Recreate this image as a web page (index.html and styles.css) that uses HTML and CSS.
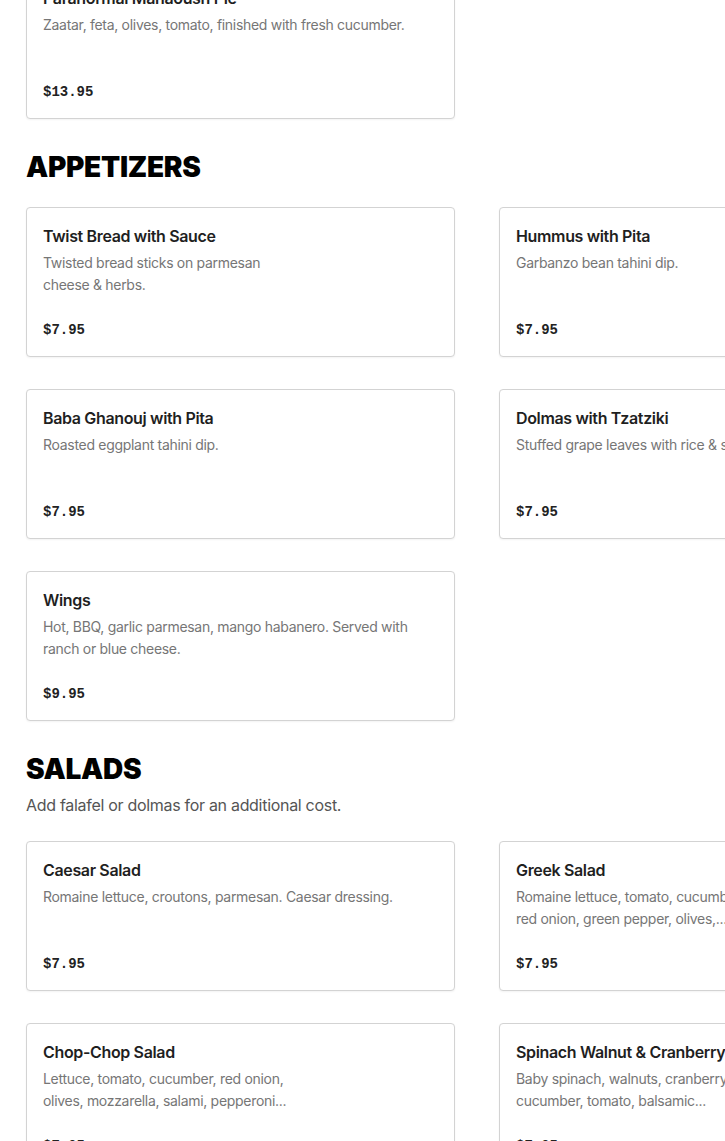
FILE: index.html
```html
<!DOCTYPE html>
<html lang="en">
<head>
<meta charset="utf-8">
<title>Menu</title>
<link rel="stylesheet" href="styles.css">
</head>
<body>
<main class="menu">
  <section class="section section-first">
    <div class="grid">
      <article class="card">
        <h3 class="item-name">Paranormal Manaoush Pie</h3>
        <p class="item-desc">Zaatar, feta, olives, tomato, finished with fresh cucumber.</p>
        <p class="item-price">$13.95</p>
      </article>
    </div>
  </section>

  <section class="section">
    <h2 class="section-title">APPETIZERS</h2>
    <div class="grid">
      <article class="card">
        <h3 class="item-name">Twist Bread with Sauce</h3>
        <p class="item-desc">Twisted bread sticks on parmesan<br>cheese &amp; herbs.</p>
        <p class="item-price">$7.95</p>
      </article>
      <article class="card">
        <h3 class="item-name">Hummus with Pita</h3>
        <p class="item-desc">Garbanzo bean tahini dip.</p>
        <p class="item-price">$7.95</p>
      </article>
      <article class="card">
        <h3 class="item-name">Baba Ghanouj with Pita</h3>
        <p class="item-desc">Roasted eggplant tahini dip.</p>
        <p class="item-price">$7.95</p>
      </article>
      <article class="card">
        <h3 class="item-name">Dolmas with Tzatziki</h3>
        <p class="item-desc">Stuffed grape leaves with rice &amp; spices.</p>
        <p class="item-price">$7.95</p>
      </article>
      <article class="card">
        <h3 class="item-name">Wings</h3>
        <p class="item-desc">Hot, BBQ, garlic parmesan, mango habanero. Served with<br>ranch or blue cheese.</p>
        <p class="item-price">$9.95</p>
      </article>
    </div>
  </section>

  <section class="section">
    <h2 class="section-title">SALADS</h2>
    <p class="section-note">Add falafel or dolmas for an additional cost.</p>
    <div class="grid">
      <article class="card">
        <h3 class="item-name">Caesar Salad</h3>
        <p class="item-desc">Romaine lettuce, croutons, parmesan. Caesar dressing.</p>
        <p class="item-price">$7.95</p>
      </article>
      <article class="card">
        <h3 class="item-name">Greek Salad</h3>
        <p class="item-desc">Romaine lettuce, tomato, cucumber, feta,<br>red onion, green pepper, olives,...</p>
        <p class="item-price">$7.95</p>
      </article>
      <article class="card">
        <h3 class="item-name">Chop-Chop Salad</h3>
        <p class="item-desc">Lettuce, tomato, cucumber, red onion,<br>olives, mozzarella, salami, pepperoni...</p>
        <p class="item-price">$7.95</p>
      </article>
      <article class="card">
        <h3 class="item-name">Spinach Walnut &amp; Cranberry Salad</h3>
        <p class="item-desc">Baby spinach, walnuts, cranberry, feta,<br>cucumber, tomato, balsamic...</p>
        <p class="item-price">$7.95</p>
      </article>
    </div>
  </section>
</main>
</body>
</html>
```

FILE: styles.css
```css
html, body {
  margin: 0;
  padding: 0;
  background: #ffffff;
  overflow: hidden;
}

body {
  font-family: Inter, "Liberation Sans", Arial, sans-serif;
  color: #1f1f1f;
}

.menu {
  padding: 0 0 0 26px;
  display: flex;
  flex-direction: column;
  gap: 32px;
}

.section-first {
  margin-top: -31px;
}

.section {
  display: flex;
  flex-direction: column;
}

.section-title {
  margin: 0 0 24px 0;
  font-family: Inter, "DejaVu Sans", sans-serif;
  font-weight: 900;
  font-size: 28px;
  line-height: 32px;
  letter-spacing: -0.3px;
  color: #000000;
}

.section-note {
  margin: -16px 0 24px 0;
  font-size: 16px;
  line-height: 24px;
  letter-spacing: -0.3px;
  color: #555555;
}

.grid {
  display: grid;
  grid-template-columns: 429px 429px;
  column-gap: 44px;
  row-gap: 32px;
}

.card {
  box-sizing: border-box;
  height: 150px;
  padding: 16px;
  border: 1px solid #d3d3d3;
  border-radius: 4px;
  box-shadow: 0 1px 2px rgba(0, 0, 0, 0.05);
  background: #ffffff;
  white-space: nowrap;
  overflow: hidden;
}

.item-name {
  margin: 0;
  font-size: 16px;
  font-weight: 600;
  line-height: 24px;
  letter-spacing: -0.35px;
  color: #1f1f1f;
}

.item-desc {
  margin: 4px 0 0 0;
  min-height: 44px;
  font-size: 14px;
  line-height: 22px;
  letter-spacing: -0.3px;
  color: #767676;
}

.item-price {
  margin: 24px 0 0 0;
  font-family: "Liberation Mono", "Courier New", monospace;
  font-weight: 700;
  font-size: 14px;
  line-height: 20px;
  color: #222222;
}
```
